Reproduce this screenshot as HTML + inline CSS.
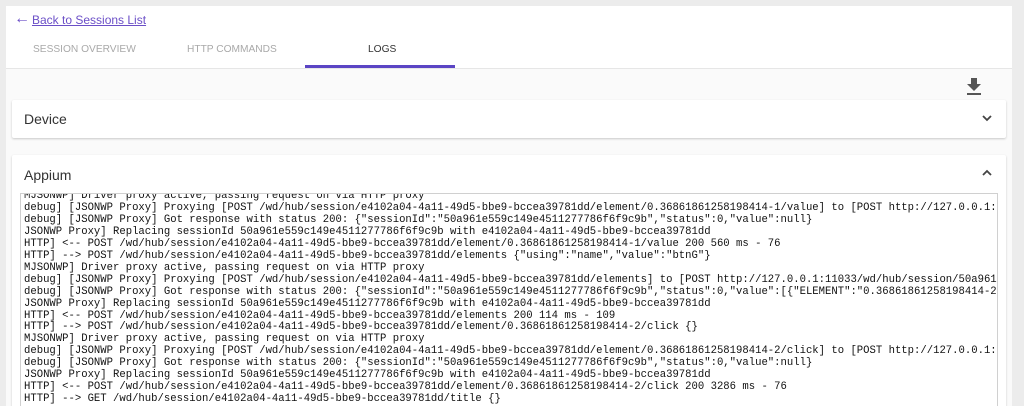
<!DOCTYPE html>
<html><head><meta charset="utf-8"><style>
html,body{margin:0;width:1024px;height:406px;overflow:hidden}
body{background:#ececec;font-family:"Liberation Sans",sans-serif;position:relative}
.page{position:absolute;left:6px;top:6px;width:1006px;height:400px;background:#fafafa;overflow:hidden}
.top{position:absolute;left:0;top:0;width:1006px;height:62px;background:#fff;border-bottom:1px solid #e6e6e6}
.back{position:absolute;left:26px;top:7px;font-size:12px;color:#6b4fc7;text-decoration:underline}
.arrow{position:absolute;left:8px;top:4px;color:#6b4fc7;font-size:16px}
.tab{position:absolute;top:38px;font-size:10.2px;color:#a9a9a9}
.ind{position:absolute;left:299px;top:59px;width:150px;height:3px;background:#5b45c4}
.card{position:absolute;left:6px;width:994px;background:#fff;box-shadow:0 1px 2px rgba(0,0,0,.2);border-radius:2px}
.ttl{position:absolute;left:12px;font-size:14px;color:#333}
.log{position:absolute;left:14px;top:187px;width:976px;height:220px;border:1px solid #d0d0d0;background:#fff;overflow:hidden}
pre{margin:0;position:absolute;left:3px;top:-3px;font-family:"Liberation Mono",monospace;font-size:10.6px;line-height:11.95px;color:#111;white-space:pre}
</style></head><body>
<div class="page">
<div class="top">
<span class="arrow">&#8592;</span><span class="back">Back to Sessions List</span>
<span class="tab" style="left:27px">SESSION OVERVIEW</span>
<span class="tab" style="left:181px">HTTP COMMANDS</span>
<span class="tab" style="left:362px;color:#333">LOGS</span>
<div class="ind"></div>
</div>
<svg style="position:absolute;left:959px;top:71px" width="18" height="20" viewBox="0 0 18 20"><path d="M6 1h6v6h4l-7 7-7-7h4z" fill="#555"/><rect x="2" y="16" width="14" height="2" fill="#555"/></svg>
<div class="card" style="top:94px;height:38px"><span class="ttl" style="top:11px">Device</span>
<svg style="position:absolute;left:969px;top:13px" width="12" height="10" viewBox="0 0 12 10"><path d="M2 3l4 4 4-4" stroke="#444" stroke-width="1.8" fill="none"/></svg></div>
<div class="card" style="top:149px;height:260px"><span class="ttl" style="top:12px">Appium</span>
<svg style="position:absolute;left:969px;top:13px" width="12" height="10" viewBox="0 0 12 10"><path d="M2 7l4-4 4 4" stroke="#444" stroke-width="1.8" fill="none"/></svg></div>
<div class="log"><pre>MJSONWP] Driver proxy active, passing request on via HTTP proxy
debug] [JSONWP Proxy] Proxying [POST /wd/hub/session/e4102a04-4a11-49d5-bbe9-bccea39781dd/element/0.36861861258198414-1/value] to [POST http://127.0.0.1:11033/wd/hub
debug] [JSONWP Proxy] Got response with status 200: {"sessionId":"50a961e559c149e4511277786f6f9c9b","status":0,"value":null}
JSONWP Proxy] Replacing sessionId 50a961e559c149e4511277786f6f9c9b with e4102a04-4a11-49d5-bbe9-bccea39781dd
HTTP] &lt;-- POST /wd/hub/session/e4102a04-4a11-49d5-bbe9-bccea39781dd/element/0.36861861258198414-1/value 200 560 ms - 76
HTTP] --&gt; POST /wd/hub/session/e4102a04-4a11-49d5-bbe9-bccea39781dd/elements {"using":"name","value":"btnG"}
MJSONWP] Driver proxy active, passing request on via HTTP proxy
debug] [JSONWP Proxy] Proxying [POST /wd/hub/session/e4102a04-4a11-49d5-bbe9-bccea39781dd/elements] to [POST http://127.0.0.1:11033/wd/hub/session/50a961e559c149e45
debug] [JSONWP Proxy] Got response with status 200: {"sessionId":"50a961e559c149e4511277786f6f9c9b","status":0,"value":[{"ELEMENT":"0.36861861258198414-2"}]}
JSONWP Proxy] Replacing sessionId 50a961e559c149e4511277786f6f9c9b with e4102a04-4a11-49d5-bbe9-bccea39781dd
HTTP] &lt;-- POST /wd/hub/session/e4102a04-4a11-49d5-bbe9-bccea39781dd/elements 200 114 ms - 109
HTTP] --&gt; POST /wd/hub/session/e4102a04-4a11-49d5-bbe9-bccea39781dd/element/0.36861861258198414-2/click {}
MJSONWP] Driver proxy active, passing request on via HTTP proxy
debug] [JSONWP Proxy] Proxying [POST /wd/hub/session/e4102a04-4a11-49d5-bbe9-bccea39781dd/element/0.36861861258198414-2/click] to [POST http://127.0.0.1:11033/wd/hub
debug] [JSONWP Proxy] Got response with status 200: {"sessionId":"50a961e559c149e4511277786f6f9c9b","status":0,"value":null}
JSONWP Proxy] Replacing sessionId 50a961e559c149e4511277786f6f9c9b with e4102a04-4a11-49d5-bbe9-bccea39781dd
HTTP] &lt;-- POST /wd/hub/session/e4102a04-4a11-49d5-bbe9-bccea39781dd/element/0.36861861258198414-2/click 200 3286 ms - 76
HTTP] --&gt; GET /wd/hub/session/e4102a04-4a11-49d5-bbe9-bccea39781dd/title {}</pre></div>
</div>
</body></html>
